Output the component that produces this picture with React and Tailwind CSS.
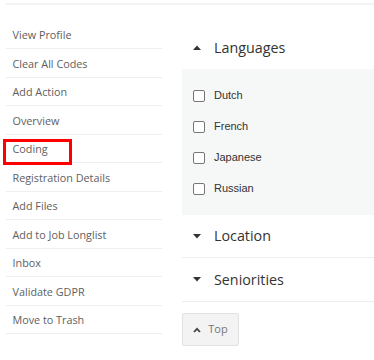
import React from "react";

const menu = [
  "View Profile",
  "Clear All Codes",
  "Add Action",
  "Overview",
  "Coding",
  "Registration Details",
  "Add Files",
  "Add to Job Longlist",
  "Inbox",
  "Validate GDPR",
  "Move to Trash",
];

const langs = ["Dutch", "French", "Japanese", "Russian"];

function Tri({ up }) {
  return (
    <svg width="8" height="5" viewBox="0 0 8 5" className="shrink-0">
      {up ? (
        <polygon points="0,5 8,5 4,0.5" fill="#333" />
      ) : (
        <polygon points="0,0 8,0 4,4.5" fill="#333" />
      )}
    </svg>
  );
}

export default function App() {
  return (
    <div
      className="w-[374px] h-[360px] bg-white overflow-hidden relative"
      style={{ fontFamily: '"Open Sans", sans-serif' }}
    >
      <div className="pt-[3px] pl-[6px]">
        <div className="h-[2px] bg-[#f3f3f3]" />
      </div>
      <div className="flex pl-[6px] gap-[20px]">
        <div className="w-[156px] shrink-0 pt-[15.5px]">
          {menu.map((m) => (
            <div
              key={m}
              className="relative h-[28.5px] border-b border-[#efefef] flex items-center pl-[6.5px] pt-[2px] text-[10.8px] text-[#5e5e5e]"
            >
              {m === "Coding" && (
                <div className="absolute left-[-3px] top-[4.5px] w-[69px] h-[26px] border-[3px] border-[#ff0000]" />
              )}
              <span>{m}</span>
            </div>
          ))}
        </div>
        <div className="flex-1 pt-[21px]">
          <div className="h-[43px] flex items-center gap-[13px] pl-[11px] text-[14.3px] text-[#333]">
            <Tri up />
            <span>Languages</span>
          </div>
          <div className="h-[146px] bg-[#f6f8f8] flex flex-col justify-center gap-[19px] pl-[11px]">
            {langs.map((l) => (
              <div key={l} className="flex items-center gap-[9px] h-[12px]">
                <div className="w-[12px] h-[12px] rounded-[2px] border border-[#767676] bg-white shrink-0" />
                <span
                  className="text-[11px] text-[#333]"
                  style={{ fontFamily: '"Liberation Sans", Arial, sans-serif' }}
                >
                  {l}
                </span>
              </div>
            ))}
          </div>
          <div className="h-[43px] border-b border-[#eeeeee] flex items-center gap-[13px] pl-[11px] text-[14.3px] text-[#333]">
            <Tri />
            <span>Location</span>
          </div>
          <div className="h-[44px] border-b border-[#eeeeee] flex items-center gap-[13px] pl-[11px] text-[14.3px] text-[#333]">
            <Tri />
            <span>Seniorities</span>
          </div>
          <div className="pt-[11px]">
            <div className="w-[57px] h-[33px] bg-[#f3f3f3] border border-[#e2e2e2] rounded-[2px] flex items-center justify-center gap-[7px] text-[11px] text-[#777]">
              <svg width="8" height="6" viewBox="0 0 8 6">
                <polyline points="1,5 4,1.8 7,5" fill="none" stroke="#444" strokeWidth="1.8" />
              </svg>
              <span>Top</span>
            </div>
          </div>
        </div>
      </div>
    </div>
  );
}
